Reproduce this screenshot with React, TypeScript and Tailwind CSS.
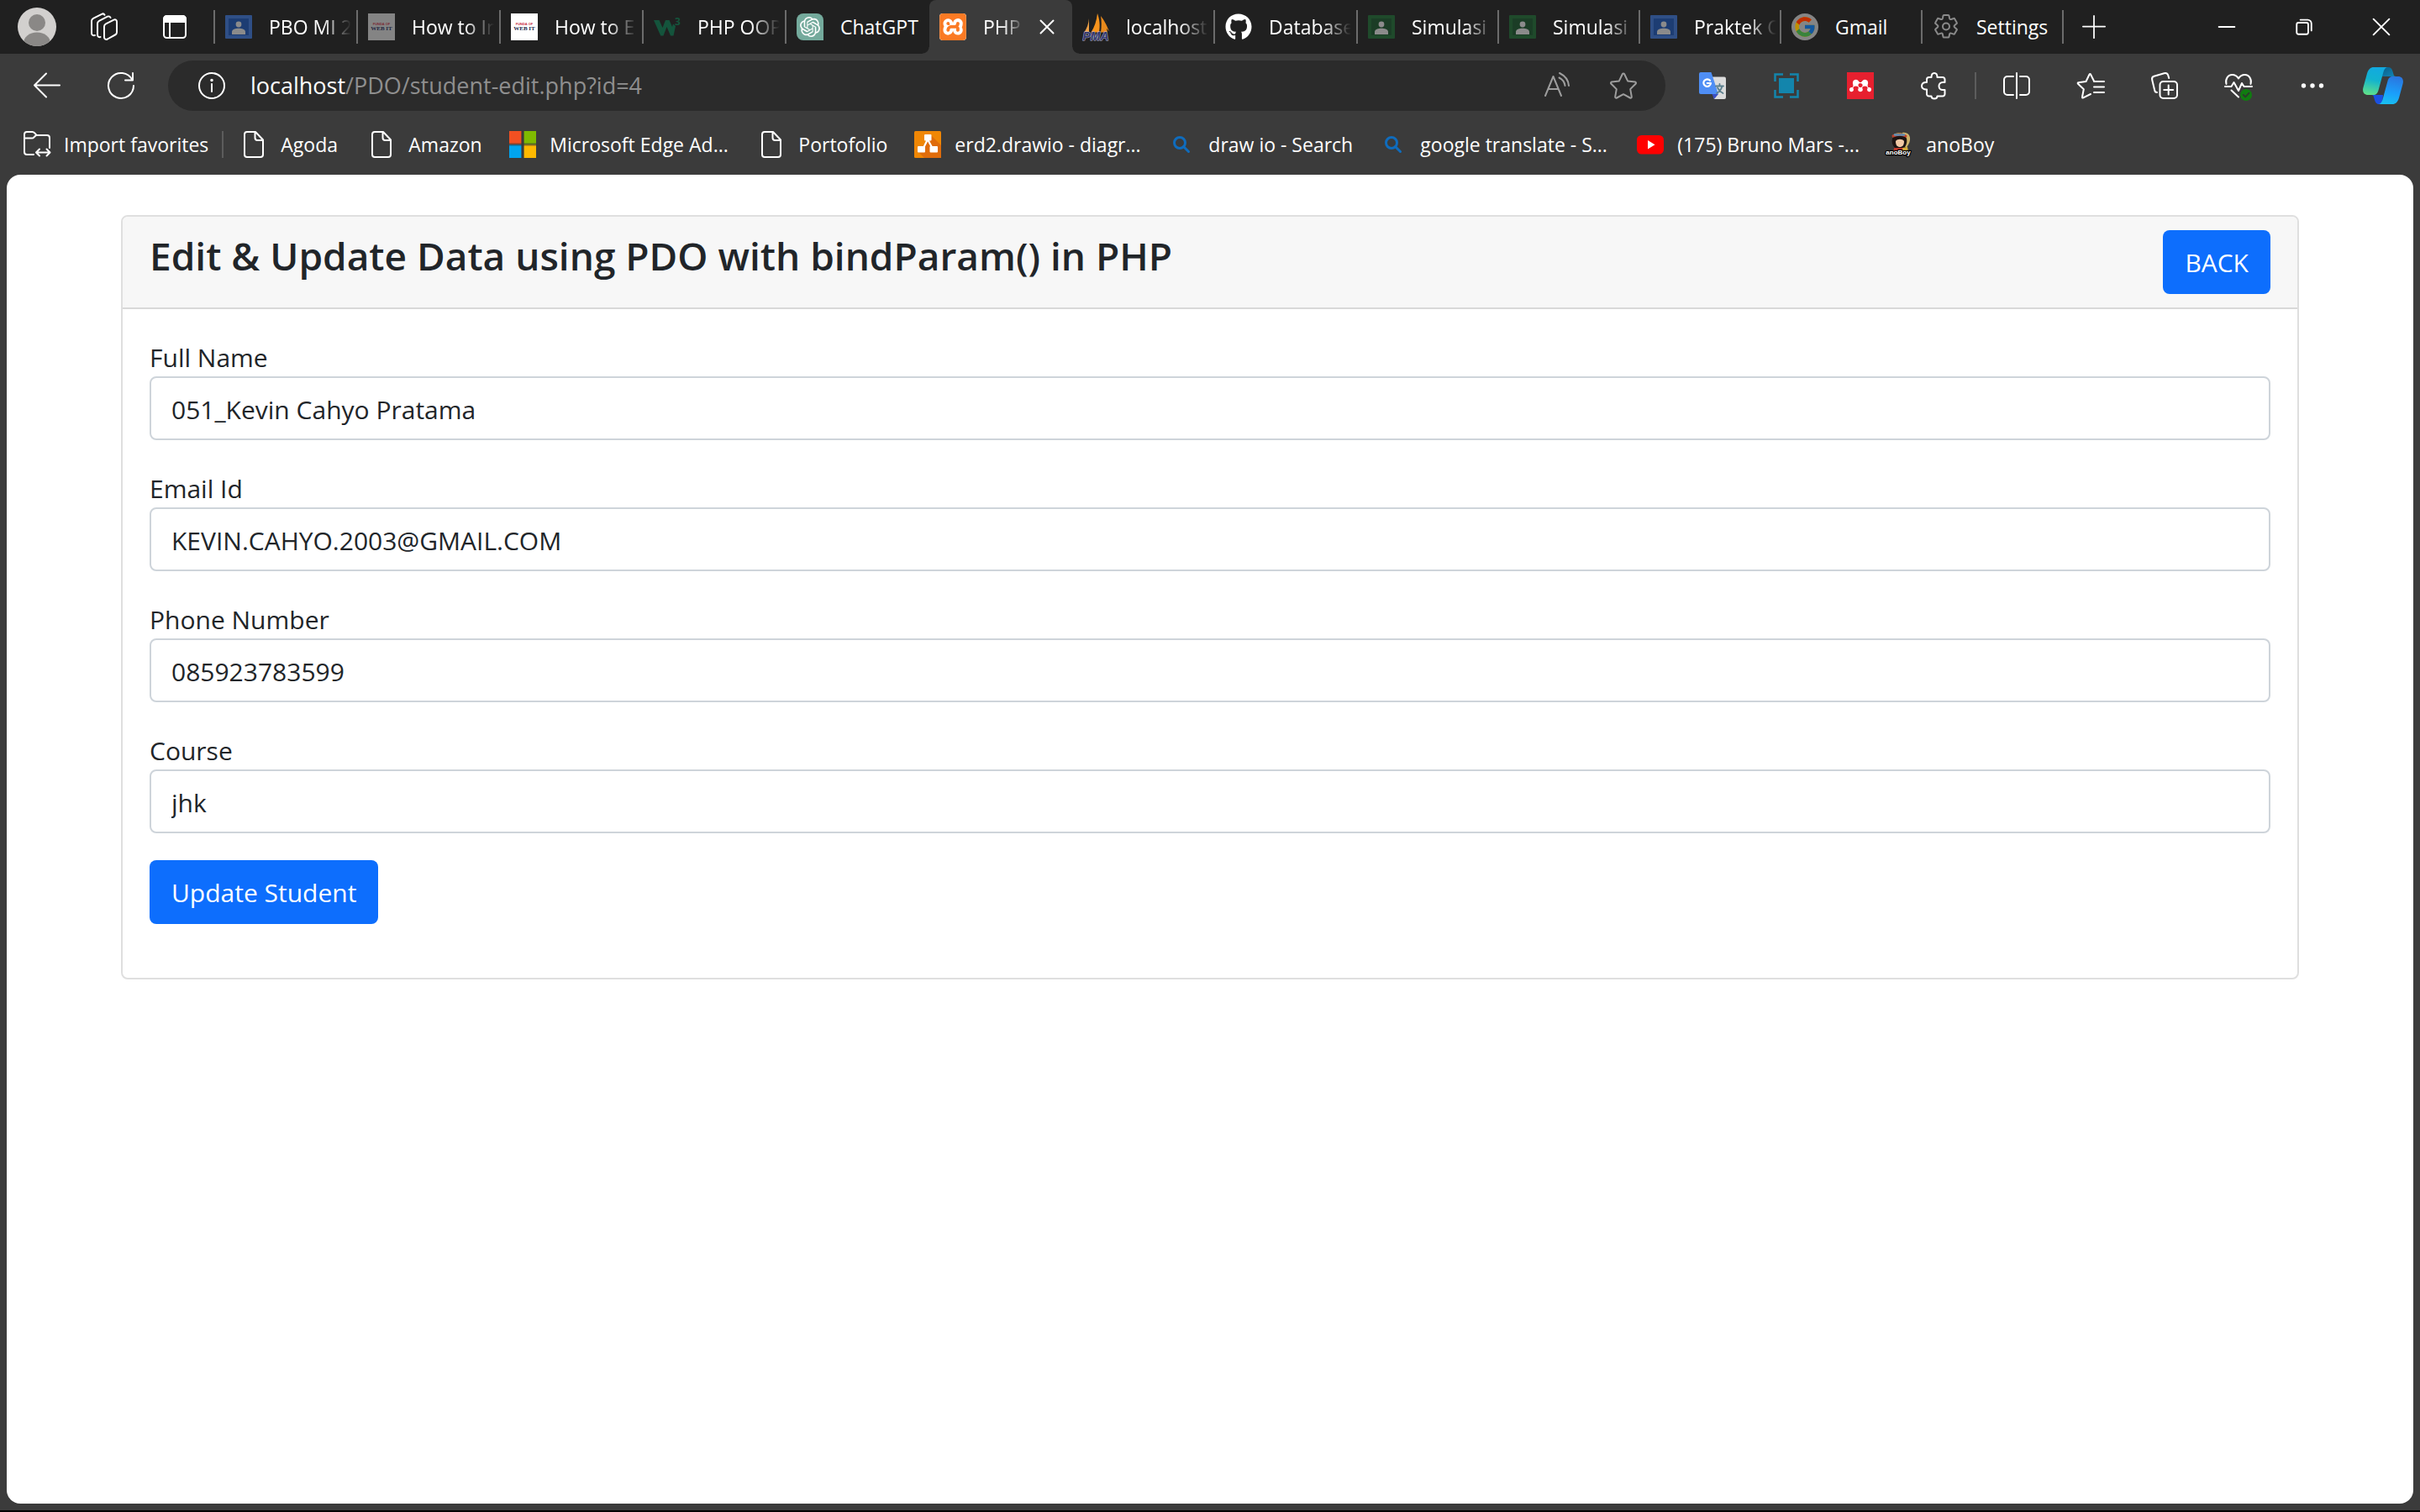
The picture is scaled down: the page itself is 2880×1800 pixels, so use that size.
import React, { type ReactNode } from "react";
import { FaGithub } from "react-icons/fa";
import { FcGoogle } from "react-icons/fc";
import { SiMendeley, SiOpenai, SiXampp } from "react-icons/si";

function Icon({ children, className = "size-8", stroke = 2 }: { children: ReactNode; className?: string; stroke?: number }) {
  return (
    <svg viewBox="0 0 32 32" className={`${className} shrink-0 overflow-visible`} fill="none" stroke="currentColor" strokeWidth={stroke} strokeLinecap="round" strokeLinejoin="round" aria-hidden="true">
      {children}
    </svg>
  );
}

/* ---------- favicons ---------- */

function Classroom({ tone }: { tone: "blue" | "green" }) {
  const outer = tone === "blue" ? "#2f4f86" : "#1f4a2b";
  const inner = tone === "blue" ? "#1d3d73" : "#1b3d26";
  return (
    <Icon stroke={0}>
      <rect x="0" y="2" width="32" height="28" rx="1" fill={outer} />
      <rect x="4" y="6" width="24" height="20" fill={inner} />
      <circle cx="16" cy="13" r="3.4" fill="#8b8b8b" />
      <path d="M8 25v-3c0-3 4-4.200 8-4.200s8 1.200 8 4.200v3z" fill="#8b8b8b" />
    </Icon>
  );
}

function WebIt({ dim = false }: { dim?: boolean }) {
  return (
    <Icon stroke={0}>
      <rect width="32" height="32" fill={dim ? "#848484" : "#ffffff"} />
      <text x="16" y="13.500" textAnchor="middle" fontFamily="Liberation Sans" fontWeight="700" fontSize="4" fill={dim ? "#7a2c35" : "#c8313f"}>FUNDA OF</text>
      <text x="16" y="20" textAnchor="middle" fontFamily="Liberation Serif" fontWeight="700" fontSize="7" fill={dim ? "#23263f" : "#1b1f4a"}>WEB IT</text>
    </Icon>
  );
}

function W3() {
  return (
    <Icon stroke={0}>
      <path d="M0 8h6.500l4 9 3.500-9h4.500l3.500 8 1-3.500 3 2.500-2.500 11.500h-3.500L15.500 16l-4 10.500H8.200z" fill="#14543c" />
      <text x="25" y="14" fontFamily="Open Sans" fontWeight="700" fontSize="12" fill="#14543c">3</text>
    </Icon>
  );
}

function ChatGpt() {
  return (
    <span className="flex size-8 shrink-0 items-center justify-center rounded-lg rounded-br-none bg-[#74aa9c] text-white">
      <SiOpenai className="size-6" />
    </span>
  );
}

function Xampp() {
  return (
    <span className="flex size-8 shrink-0 overflow-hidden rounded-sm bg-white text-[#fb7a24]">
      <SiXampp className="size-8" />
    </span>
  );
}

function Pma() {
  return (
    <Icon stroke={0}>
      <path d="M8 6v17H2c3.500-5 5.500-11 6-17z" fill="#f0a146" />
      <path d="M18 0c-1 9-3.500 16-7.500 22.500H20c1.500-8 .5-16-2-22.500z" fill="#f7941d" />
      <path d="M22 3c4 5 6.500 10 10 18l-3-3 1 4.500h-8c1-7 1-13 0-19.500z" fill="#e98a1c" />
      <text x="16" y="31.500" textAnchor="middle" fontFamily="Liberation Sans" fontWeight="700" fontStyle="italic" fontSize="14" fill="#34386e" stroke="#b9bbd2" strokeWidth="1" paintOrder="stroke">PMA</text>
    </Icon>
  );
}

function Google() {
  return (
    <span className="flex size-8 shrink-0 items-center justify-center rounded-full bg-[#858585]">
      <FcGoogle className="size-7 brightness-75" />
    </span>
  );
}

function Gear() {
  return (
    <Icon>
      <g stroke="#8a8a8a">
        <path d="M13.500 2h5c.5 0 .9.300 1 .8l.6 3.100c.2.900 1 1.400 1.900 1.100l3-1c.5-.2 1 0 1.200.5l2.500 4.300c.3.400.2 1-.2 1.300l-2.400 2.100c-.7.600-.7 1.600 0 2.200l2.400 2.100c.4.300.5.900.2 1.300l-2.500 4.300c-.2.500-.7.700-1.200.5l-3-1c-.9-.3-1.700.2-1.900 1.100l-.6 3.100c-.1.500-.5.800-1 .8h-5c-.5 0-.9-.3-1-.8l-.6-3.100c-.2-.9-1-1.400-1.900-1.100l-3 1c-.5.2-1 0-1.200-.5l-2.500-4.300c-.3-.4-.2-1 .2-1.300l2.400-2.100c.7-.6.700-1.600 0-2.200l-2.400-2.100c-.4-.3-.5-.9-.2-1.300l2.500-4.300c.2-.5.7-.7 1.200-.5l3 1c.9.3 1.700-.2 1.900-1.100l.6-3.100c.1-.5.500-.8 1-.8z" />
        <circle cx="16" cy="15.500" r="4" />
      </g>
    </Icon>
  );
}

/* ---------- tab strip ---------- */

type TabData = { title: string; icon: ReactNode; narrow?: boolean; active?: boolean; divider?: boolean; fits?: boolean };

const tabs: TabData[] = [
  { title: "PBO MI 2", icon: <Classroom tone="blue" />, divider: true },
  { title: "How to In", icon: <WebIt dim />, divider: true },
  { title: "How to E", icon: <WebIt />, divider: true },
  { title: "PHP OOP", icon: <W3 />, divider: true },
  { title: "ChatGPT", icon: <ChatGpt />, fits: true },
  { title: "PHP", icon: <Xampp />, active: true },
  { title: "localhost", icon: <Pma />, divider: true },
  { title: "Database", icon: <FaGithub className="size-8 shrink-0 text-white" />, divider: true },
  { title: "Simulasi", icon: <Classroom tone="green" />, divider: true, narrow: true },
  { title: "Simulasi", icon: <Classroom tone="green" />, divider: true, narrow: true },
  { title: "Praktek O", icon: <Classroom tone="blue" />, divider: true, narrow: true },
  { title: "Gmail", icon: <Google />, divider: true, narrow: true, fits: true },
  { title: "Settings", icon: <Gear />, divider: true, narrow: true, fits: true },
];

function Tab({ tab }: { tab: TabData }) {
  if (tab.active) {
    return (
      <div className="relative flex h-16 w-[170px] shrink-0 items-center rounded-t-lg bg-[#3b3b3b] pl-3">
        <span className="absolute bottom-0 -left-2 size-2 bg-[radial-gradient(circle_at_0_0,#202020_7px,#3b3b3b_8px)]" />
        <span className="absolute -right-2 bottom-0 size-2 bg-[radial-gradient(circle_at_100%_0,#202020_7px,#3b3b3b_8px)]" />
        {tab.icon}
        <button className="ml-5 w-12 overflow-hidden text-left whitespace-nowrap mask-r-from-50%">{tab.title}</button>
        <button aria-label="Close tab" className="ml-5">
          <Icon className="size-4" stroke={4}><path d="M1 1l30 30M31 1L1 31" /></Icon>
        </button>
      </div>
    );
  }
  return (
    <div className={`${tab.narrow ? "w-[168px]" : "w-[170px]"} flex h-16 shrink-0 items-center pl-3`}>
      {tab.icon}
      <button className={`${tab.fits ? "" : "mask-r-from-65%"} ml-5 w-[98px] overflow-hidden text-left whitespace-nowrap`}>{tab.title}</button>
      {tab.divider && <span className="ml-auto h-10 w-0.5 bg-[#6b6b6b]" />}
    </div>
  );
}

function TabStrip() {
  return (
    <div className="flex h-16 items-center bg-[#202020] text-[23px]">
      <button aria-label="Profile" className="ml-5 flex w-12 justify-center">
        <svg viewBox="0 0 46 46" className="size-[46px]" aria-hidden="true">
          <clipPath id="avatar"><circle cx="23" cy="23" r="23" /></clipPath>
          <g clipPath="url(#avatar)">
            <rect width="46" height="46" fill="#d2d0ce" />
            <circle cx="23" cy="18" r="10" fill="#8a8886" />
            <ellipse cx="23" cy="42" rx="16" ry="12.500" fill="#8a8886" />
          </g>
        </svg>
      </button>
      <button aria-label="Workspaces" className="ml-10">
        <Icon>
          <path d="M16 15.500c0-1.500.8-2.600 2-3.200l9.500-4.600c1.800-.9 3.500 0 3.500 2v12.800c0 1.200-.7 2.300-2 3l-9 5c-2 1-4 0-4-2z" />
          <path d="M11.500 28c-2 .5-3.500-.4-3.500-2.400V12c0-1.500.8-2.600 2-3.200l10-5.100c1.500-.7 3 0 3.500 1.300" />
          <path d="M5 26c-2.500.5-4-.4-4-2.400V9c0-1.500.8-2.600 2-3.200l10-5c1.500-.7 3 0 3.500 1" />
        </Icon>
      </button>
      <button aria-label="Tab actions" className="ml-13">
        <Icon>
          <rect x="3" y="3" width="26" height="26" rx="3.500" />
          <path d="M3 7a4 4 0 0 1 4-4h18a4 4 0 0 1 4 4v3H3z" fill="currentColor" />
          <path d="M10 10v19" />
        </Icon>
      </button>
      <span className="ml-[30px] h-10 w-0.5 bg-[#6b6b6b]" />
      {tabs.map((tab, i) => <Tab key={i} tab={tab} />)}
      <button aria-label="New tab" className="ml-[22px]">
        <Icon className="size-7"><path d="M1 15.500h30M16 1v30" /></Icon>
      </button>
      <div className="mr-9 ml-auto flex items-center gap-[72px]">
        <button aria-label="Minimise"><Icon className="size-5" stroke={3}><path d="M1 16h30" /></Icon></button>
        <button aria-label="Restore">
          <Icon className="size-5" stroke={3}>
            <rect x="2" y="8" width="22" height="22" rx="3.500" />
            <path d="M9 2.500h14a7 7 0 0 1 7 7V23" />
          </Icon>
        </button>
        <button aria-label="Close"><Icon className="size-5" stroke={3}><path d="M1 1l30 30M31 1L1 31" /></Icon></button>
      </div>
    </div>
  );
}

/* ---------- toolbar ---------- */

function Translate() {
  return (
    <Icon stroke={0}>
      <path d="M12 5.500h18a2 2 0 0 1 2 2V30a2 2 0 0 1-2 2H18z" fill="#dcdcdc" />
      <path d="M15.500 26H23l-5 6z" fill="#3a4fc4" />
      <path d="M2 0h12.500l8.500 26H2a2 2 0 0 1-2-2V2a2 2 0 0 1 2-2z" fill="#4f8ef5" />
      <path d="M20 16.500h9M24.500 14v2.500M27.500 16.500c-1 4-3 6.500-6.500 8.500M22 18.500c1.500 3 3.500 5 6.500 6.500" stroke="#5b7f8d" strokeWidth="1.800" />
      <path d="M13 9.800a4.300 4.300 0 1 0 1 3.200H9.800" stroke="#fff" strokeWidth="2.200" />
    </Icon>
  );
}

function Capture() {
  return (
    <Icon stroke={2.500}>
      <g stroke="#1385ac" strokeLinecap="butt" strokeLinejoin="miter">
        <path d="M2.500 11V2.500H12M20 2.500h9.500V11M29.500 21v8.500H20M12 29.500H2.500V21" />
        <rect x="7" y="7" width="18" height="18" fill="#1385ac" stroke="none" />
      </g>
    </Icon>
  );
}

function Mendeley() {
  return (
    <span className="flex size-8 items-center justify-center bg-[#e7202f] text-white">
      <SiMendeley className="size-[26px]" />
    </span>
  );
}

function Copilot() {
  return (
    <svg viewBox="0 0 48 46" className="h-[46px] w-12" aria-hidden="true">
      <defs>
        <linearGradient id="cpLeft" x1="0.500" y1="0" x2="0.300" y2="1">
          <stop offset="0" stopColor="#12a9e0" /><stop offset="0.450" stopColor="#12b3cf" /><stop offset="1" stopColor="#5fe08a" />
        </linearGradient>
        <linearGradient id="cpRight" x1="0.600" y1="0" x2="0.400" y2="1">
          <stop offset="0" stopColor="#2a76e0" /><stop offset="0.600" stopColor="#1aa0fb" /><stop offset="1" stopColor="#19bff0" />
        </linearGradient>
        <linearGradient id="cpTop" x1="0" y1="0" x2="1" y2="1">
          <stop offset="0" stopColor="#0a5c86" /><stop offset="1" stopColor="#1287b8" />
        </linearGradient>
      </defs>
      <path d="M24 1h6c3 0 4.500 1.500 5.500 5l1 3.500c.4 1.800 1.500 2.500 3 2.500H22z" fill="url(#cpTop)" />
      <path d="M10 34h14l-1 11h-4c-2.500 0-4-1.500-5-5l-1-3.500c-.5-1.800-1.500-2.500-3-2.500z" fill="#1b50e0" />
      <path d="M13 1h17c-3 0-4.500 2-5.500 5.500l-6 22C17.500 32 16 34 12 34H6c-4.500 0-7-3.500-5.500-9L5 8.500C6.500 3.500 9 1 13 1z" fill="url(#cpLeft)" />
      <path d="M35 45H18c3 0 4.500-2 5.500-5.500l6-22C30.500 14 32 12 36 12h6c4.500 0 7 3.500 5.500 9L43 37.500c-1.500 5-4 7.500-8 7.500z" fill="url(#cpRight)" />
    </svg>
  );
}

function Star() {
  return (
    <Icon><path d="M14.800 2.200c.5-1 1.900-1 2.400 0l3.900 8.200 8.800 1.200c1.100.2 1.500 1.400.7 2.200l-6.400 6.300 1.600 9c.2 1.100-.9 1.900-1.900 1.400L16 26.200l-7.900 4.300c-1 .5-2.100-.3-1.900-1.400l1.600-9-6.400-6.300c-.8-.8-.4-2 .7-2.200l8.800-1.200z" /></Icon>
  );
}

function Toolbar() {
  return (
    <div className="flex h-20 items-center pt-2 pb-3">
      <button aria-label="Back" className="ml-10"><Icon><path d="M31 15.500H1M15 1.500L1 15.500l14 14" /></Icon></button>
      <button aria-label="Refresh" className="ml-14">
        <Icon><path d="M31 16A15 15 0 1 1 29.300 9M30 1v8.500h-9" /></Icon>
      </button>
      <div className="ml-10 flex h-15 flex-1 items-center rounded-full bg-[#2b2b2b] pr-[34px] pl-9">
        <Icon><circle cx="16" cy="16" r="15" /><path d="M16 14v9" /><circle cx="16" cy="9.500" r="0.800" fill="currentColor" /></Icon>
        <div role="textbox" aria-label="Address" className="ml-[30px] flex-1 text-[27px] whitespace-nowrap text-[#8f8f8f]"><span className="text-white">localhost</span>/PDO/student-edit.php?id=4</div>
        <button aria-label="Read aloud" className="text-[#9d9d9d]">
          <Icon><path d="M3 28L12.500 5 22 28M6.500 20h12M20 1c6 3 10.500 8.500 11 15M19.500 6.500c4 2 6.500 5.500 7 9.500" /></Icon>
        </button>
        <button aria-label="Add to favorites" className="ml-12 text-[#9d9d9d]"><Star /></button>
      </div>
      <div className="ml-10 flex items-center gap-14">
        <button aria-label="Google Translate"><Translate /></button>
        <button aria-label="Capture"><Capture /></button>
        <button aria-label="Mendeley"><Mendeley /></button>
        <button aria-label="Extensions">
          <Icon>
            <path d="M12.500 6H9.500A2.500 2.500 0 0 0 7 8.500V12C3.500 11.500 1 13.500 1 16.200S3.500 21 7 20.500V26a2.500 2.500 0 0 0 2.500 2.500h3c0 1.700 1.500 3 3.500 3s3.500-1.300 3.500-3H26a2.500 2.500 0 0 0 2.500-2.500v-5h-2.500c-2.500 0-4.500-2-4.500-4.500S23.500 12 26 12h2.500V8.500A2.500 2.500 0 0 0 26 6h-6.500c0-3-1.500-5-3.500-5s-3.500 2-3.500 5z" />
          </Icon>
        </button>
      </div>
      <span className="ml-8 h-8 w-0.5 bg-[#5c5c5c]" />
      <div className="ml-8 flex items-center gap-14">
        <button aria-label="Split screen"><Icon><path d="M12 5H5a4 4 0 0 0-4 4v14a4 4 0 0 0 4 4h7M20 5h7a4 4 0 0 1 4 4v14a4 4 0 0 1-4 4h-7M16 1v30" /></Icon></button>
        <button aria-label="Favorites">
          <Icon><path d="M20 10.500L16 2.500c-.4-.8-1-.8-1.400 0L10.500 11l-9 1.300c-.9.1-1.100.8-.5 1.400l6.800 6.500L6 29.500c-.2.900.4 1.300 1.200.9L16 26M20 11h12M20 17.500h12M20 24h12" /></Icon>
        </button>
        <button aria-label="Collections">
          <Icon><rect x="10.500" y="11" width="20.500" height="20" rx="4" /><path d="M20.700 15.500v11M15.200 21h11M7 24c-1.500 0-2.500-1-2.800-2.500L1.200 9c-.5-2 .5-3.600 2.300-4.200l12-3.500c2-.5 4 .3 4.700 2.200l1 3.500" /></Icon>
        </button>
        <button aria-label="Browser essentials">
          <Icon>
            <path d="M1.500 14C0 9 3 3 8.500 3c3.500 0 6 2 7.500 4.500C17.500 5 20 3 23.500 3 29 3 32 9 30.500 14M0 17h7.500l3-5 5.500 10 4-9 2.500 4H32M7.500 21.500l8.500 8" />
            <circle cx="25" cy="27" r="7" fill="#107c10" stroke="none" />
            <path d="M21.800 27l2.400 2.400 4.200-4.600" stroke="#2b3b2b" />
          </Icon>
        </button>
        <button aria-label="Settings and more">
          <Icon stroke={0}><g fill="currentColor"><circle cx="5.500" cy="16" r="2.700" /><circle cx="16" cy="16" r="2.700" /><circle cx="26.500" cy="16" r="2.700" /></g></Icon>
        </button>
      </div>
      <button aria-label="Copilot" className="mr-5 ml-11"><Copilot /></button>
    </div>
  );
}

/* ---------- favorites bar ---------- */

function Page() {
  return <Icon><path d="M8 1h10l9 9.500V28a3 3 0 0 1-3 3H8a3 3 0 0 1-3-3V4a3 3 0 0 1 3-3zM17.500 1v7a3 3 0 0 0 3 3H27" /></Icon>;
}

function Microsoft() {
  return (
    <Icon stroke={0}>
      <path d="M0 0h15v16H0z" fill="#f25022" /><path d="M17 0h15v16H17z" fill="#7fba00" />
      <path d="M0 16h15v16H0z" fill="#00a4ef" /><path d="M17 16h15v16H17z" fill="#ffb900" />
      <path d="M0 14.500h32v3H0z" fill="#3b3b3b" fillOpacity="0.600" /><path d="M14 0h4v32h-4z" fill="#3b3b3b" fillOpacity="0.600" />
    </Icon>
  );
}

function Drawio() {
  return (
    <Icon stroke={0}>
      <rect width="32" height="32" rx="1.500" fill="#f08705" />
      <path d="M20 5l12 12v15H12l-7-7z" fill="#df6c0c" />
      <path d="M16 10l-6 12M16 10l6.500 12" stroke="#fff" strokeWidth="2.200" />
      <g fill="#fff"><rect x="12" y="4" width="8.500" height="7.500" rx="1" /><rect x="4" y="18" width="9" height="7.500" rx="1" /><rect x="18.500" y="18" width="9.500" height="7.500" rx="1" /></g>
    </Icon>
  );
}

function Search() {
  return <Icon stroke={3}><g stroke="#0f6cbd"><circle cx="14" cy="14" r="6.500" /><path d="M18.500 18.500l6 6" /></g></Icon>;
}

function Youtube() {
  return <Icon stroke={0}><rect y="5" width="32" height="22.500" rx="5.500" fill="#ff0000" /><path d="M13 11v10.500l8.500-5.200z" fill="#fff" /></Icon>;
}

function AnoBoy() {
  return (
    <Icon stroke={0}>
      <path d="M20 2c6-1 10 3 9 9-.5 4-3 6-4 9l-6-4z" fill="#cdb36c" />
      <path d="M8 6c2-5 16-5 17 1l1 7-18 1z" fill="#c9a24f" />
      <path d="M8 9c0-5 15-6 17 0 1 5-1 9-3 11H11c-3-3-4-7-3-11z" fill="#1c1413" />
      <path d="M12 12c2-3 8-3 10 0 0 5-2 7-5 7s-5-2-5-7z" fill="#f1c9a5" />
      <path d="M9 6c5-2 11-2 15 0" stroke="#c0402c" strokeWidth="3" />
      <path d="M11 4.500h5M18 4.500h4" stroke="#5d91b8" strokeWidth="2.500" />
      <path d="M10 20h13l4 9H9z" fill="#c0392b" /><path d="M20 20l6-1 2 10h-6z" fill="#d8b13a" />
      <text x="15" y="28" textAnchor="middle" fontFamily="Liberation Sans" fontWeight="700" fontSize="8" fill="#fff" stroke="#000" strokeWidth="2.500" paintOrder="stroke">anoBoy</text>
    </Icon>
  );
}

const favorites = [
  { label: "Agoda", icon: <Page />, width: "w-[152px]" },
  { label: "Amazon", icon: <Page />, width: "w-[168px]" },
  { label: "Microsoft Edge Ad...", icon: <Microsoft />, width: "w-[296px]" },
  { label: "Portofolio", icon: <Page />, width: "w-[186px]" },
  { label: "erd2.drawio - diagr...", icon: <Drawio />, width: "w-[302px]" },
  { label: "draw io - Search", icon: <Search />, width: "w-[252px]" },
  { label: "google translate - S...", icon: <Search />, width: "w-[306px]" },
  { label: "(175) Bruno Mars -...", icon: <Youtube />, width: "w-[296px]" },
  { label: "anoBoy", icon: <AnoBoy />, width: "w-[160px]" },
];

function FavoritesBar() {
  return (
    <nav className="flex h-16 items-center pb-2 text-[23px] whitespace-nowrap">
      <button className="ml-7 flex items-center gap-4">
        <Icon>
          <path d="M1 9V4a3 3 0 0 1 3-3h6.500c1 0 1.800.4 2.500 1.200L15.500 5H28a3 3 0 0 1 3 3v12M1 8.500h9c1 0 1.800-.4 2.500-1.200L15 5M1 8v17a3 3 0 0 0 3 3h8" />
          <path d="M15.500 25.500H31M19 21.500l-4 4 4 4M27.500 21.500l4 4-4 4" />
        </Icon>
        Import favorites
      </button>
      <span className="ml-4 h-8 w-0.5 bg-[#5c5c5c]" />
      <div className="ml-5 flex">
        {favorites.map((f) => (
          <a key={f.label} href="#" className={`${f.width} flex shrink-0 items-center gap-4`}>{f.icon}{f.label}</a>
        ))}
      </div>
    </nav>
  );
}

/* ---------- page ---------- */

const fields = [
  { id: "fullname", label: "Full Name", value: "051_Kevin Cahyo Pratama" },
  { id: "email", label: "Email Id", value: "KEVIN.CAHYO.2003@GMAIL.COM" },
  { id: "phone", label: "Phone Number", value: "085923783599" },
  { id: "course", label: "Course", value: "jhk" },
];

function EditForm() {
  return (
    <section className="rounded-lg border-2 border-[#dfdfdf] bg-white">
      <header className="flex items-start justify-between rounded-t-md border-b-2 border-[#d8d8d8] bg-[#f7f7f7] px-8 py-4">
        <h1 className="text-[46px] leading-[60px] font-semibold">Edit &amp; Update Data using PDO with bindParam() in PHP</h1>
        <a href="#" className="rounded-lg bg-[#0d6efd] px-[26px] pt-[15px] pb-[13px] text-white">BACK</a>
      </header>
      <form className="flex flex-col gap-8 px-8 pt-8 pb-16" onSubmit={(e) => e.preventDefault()}>
        {fields.map((f) => (
          <div key={f.id} className="flex flex-col">
            <label htmlFor={f.id} className="pt-1 leading-[44px]">{f.label}</label>
            <input id={f.id} name={f.id} defaultValue={f.value} className="h-19 rounded-lg border-2 border-[#ced4da] px-6 pt-0.5" />
          </div>
        ))}
        <button type="submit" className="self-start rounded-lg bg-[#0d6efd] px-[26px] pt-[15px] pb-[13px] text-white">Update Student</button>
      </form>
    </section>
  );
}

export default function App() {
  return (
    <div className="flex min-h-screen flex-col border-b-2 border-black bg-[#3b3b3b] font-['Open_Sans',sans-serif] text-white">
      <TabStrip />
      <Toolbar />
      <FavoritesBar />
      <main className="mx-2 mb-2 flex-1 rounded-2xl bg-white px-34 py-12 text-[30px] leading-[48px] text-[#212529]">
        <EditForm />
      </main>
    </div>
  );
}
